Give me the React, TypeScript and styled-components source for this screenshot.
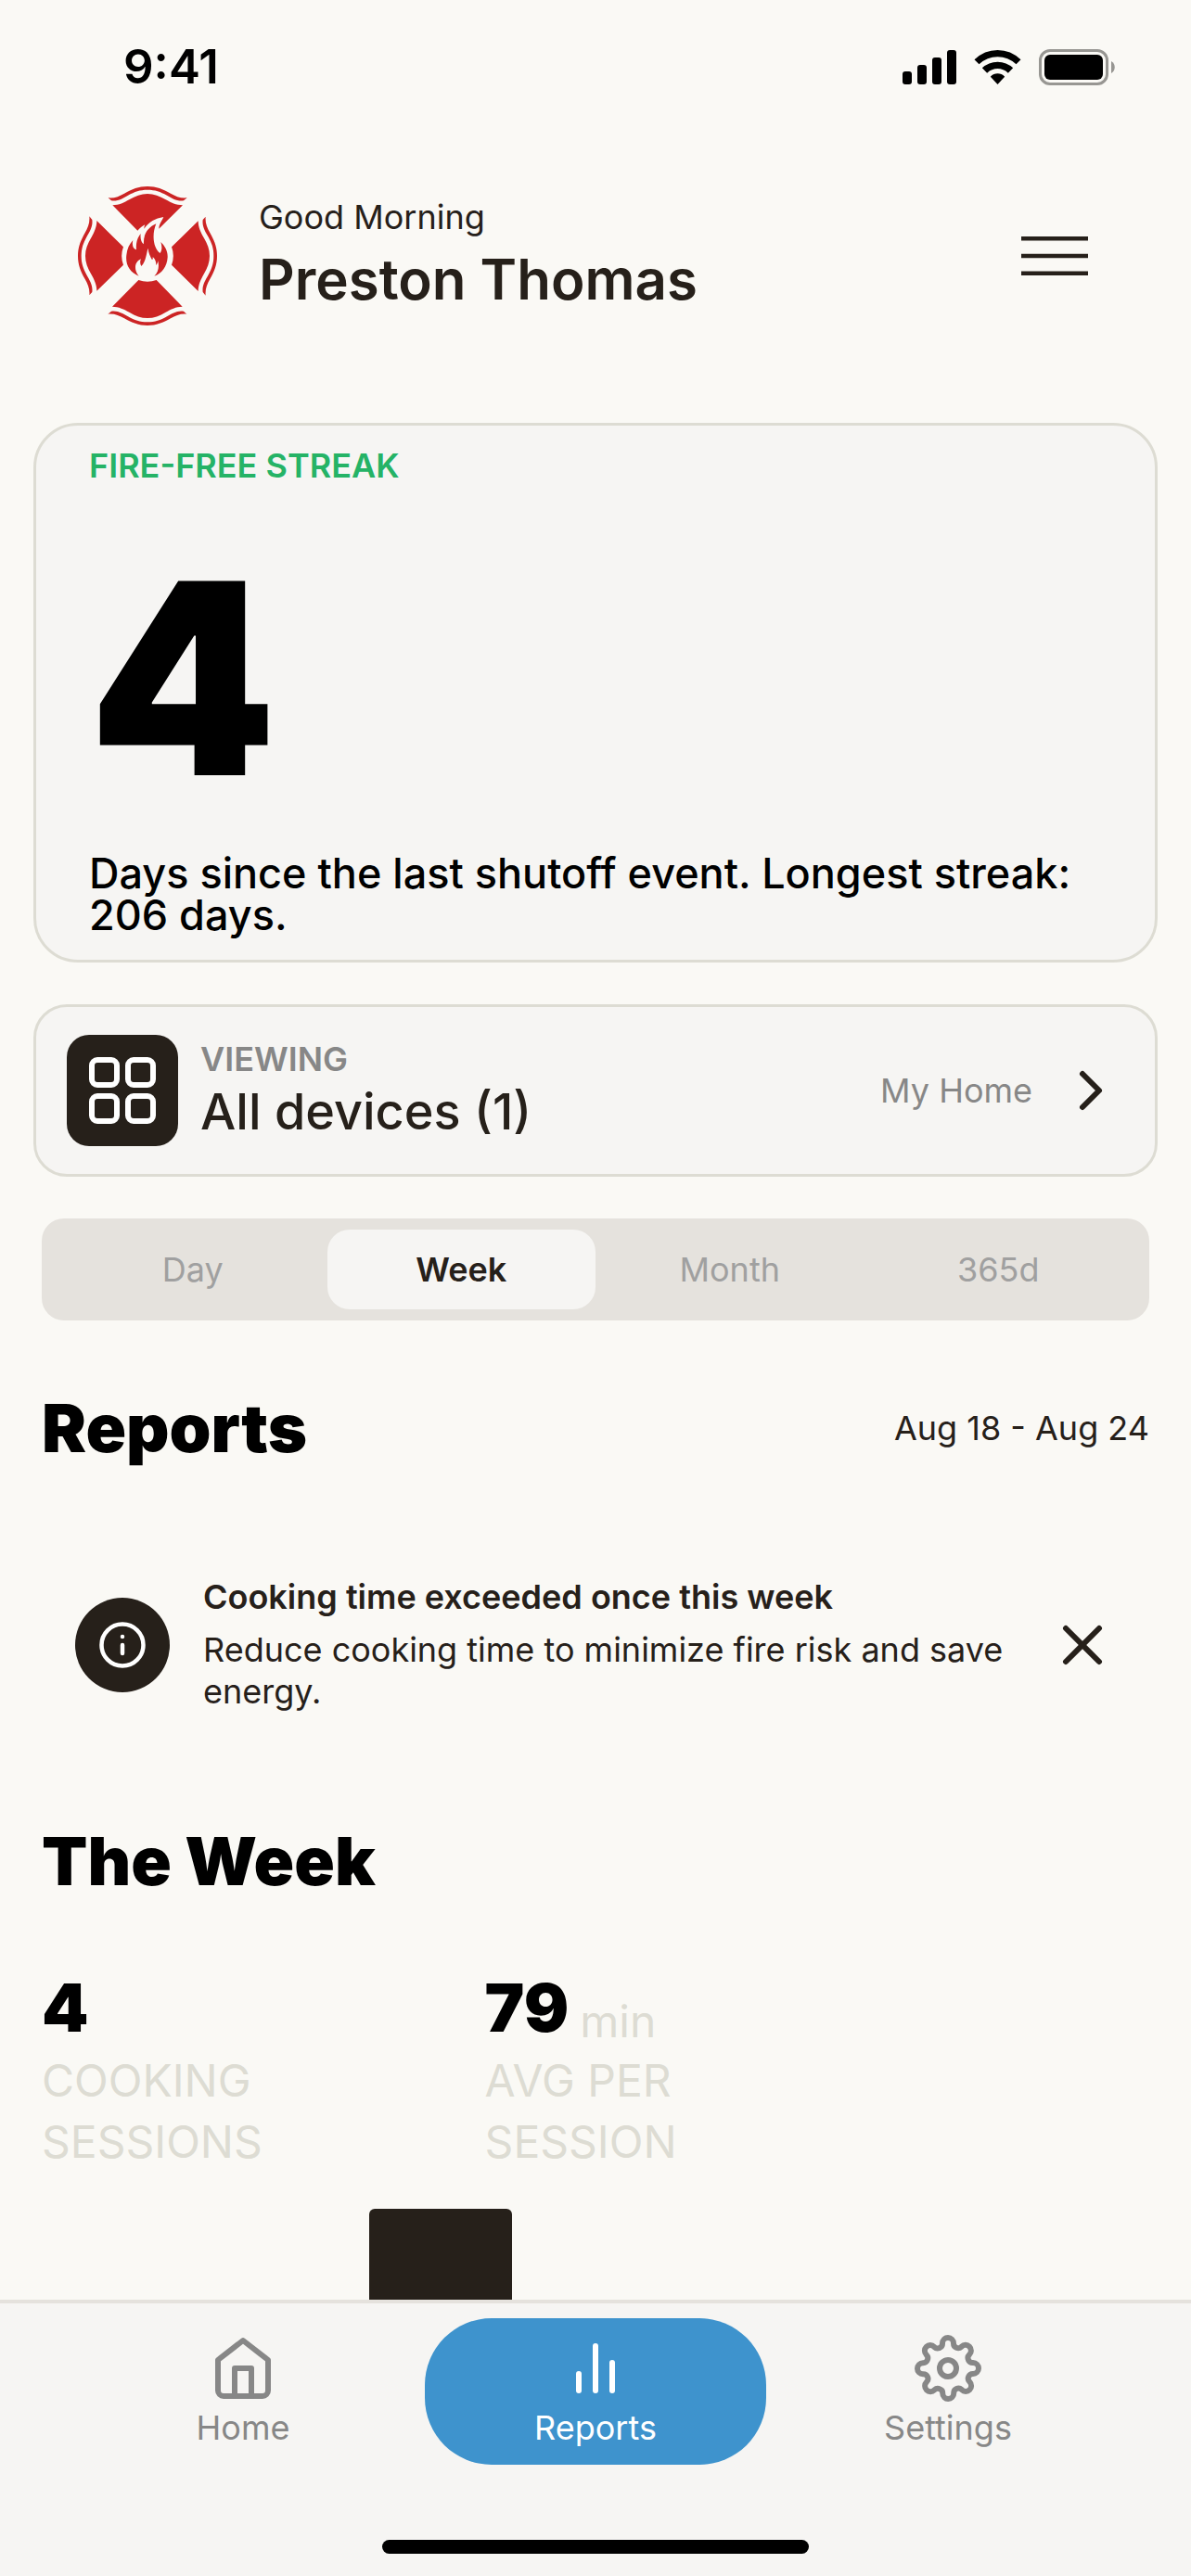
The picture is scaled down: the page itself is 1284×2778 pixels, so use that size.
import { useState } from "react";
import styled, { createGlobalStyle } from "styled-components";
import {
  FiBarChart2,
  FiChevronRight,
  FiHome,
  FiInfo,
  FiSettings,
  FiX,
} from "react-icons/fi";

const colors = {
  background: "#faf9f5",
  surface: "#f6f5f3",
  track: "#e5e2dd",
  border: "#dddcd3",
  ink: "#26201a",
  black: "#000000",
  gray: "#878787",
  grayLight: "#a0a0a0",
  green: "#25b366",
  blue: "#3e93cd",
  red: "#cc2424",
  white: "#ffffff",
};

const periods = ["Day", "Week", "Month", "365d"];

const sessions = [
  { day: "Mon", share: 0 },
  { day: "Tue", share: 0 },
  { day: "Wed", share: 100 },
  { day: "Thu", share: 0 },
  { day: "Fri", share: 0 },
  { day: "Sat", share: 0 },
  { day: "Sun", share: 0 },
];

const navItems = [
  { label: "Home", icon: FiHome },
  { label: "Reports", icon: FiBarChart2 },
  { label: "Settings", icon: FiSettings },
];

const petal =
  "M184 124C205 124 222 115 238 106C258 94 276 87 297 87C318 87 336 94 356 106C372 115 390 124 411 124L326 210A82 82 0 0 0 268 210Z";
const band =
  "M170 100C190 102 206 95 222 86C247 72 268 63 297 63C326 63 347 72 372 86C388 95 404 102 425 100L414 109C392 112 376 101 360 92C338 80 322 74 297 74C272 74 256 80 234 92C218 101 202 112 180 109Z";

const Logo = () => (
  <svg width="150" height="150" viewBox="72 63 450 450" fill={colors.red} aria-hidden="true">
    {[0, 90, 180, 270].map((angle) => (
      <path key={angle} d={band} transform={`rotate(${angle} 297 288)`} />
    ))}
    {[90, 180, 270].map((angle) => (
      <path key={angle} d={petal} transform={`rotate(${angle} 297 288)`} />
    ))}
    <path d="M184 124C205 124 222 115 238 106C258 94 276 87 297 87C318 87 336 94 356 106C372 115 390 124 411 124L334 200C334 186 343 176 349 162C322 166 302 178 286 200C286 195 287 191 289 187C280 191 272 198 265 206Z" />
    <path d="M250 237C246 255 251 266 261 268C259 248 263 231 275 216C273 233 277 244 285 250C283 217 298 196 325 184C310 220 316 264 338 279C345 268 344 256 340 243C355 258 363 273 362 293C360 322 344 344 319 353C333 341 335 322 331 304C330 311 328 315 325 318C325 308 323 299 314 291C315 296 314 299 312 301C305 288 300 278 299 263C293 278 293 305 277 321C273 314 272 306 276 298C256 306 251 332 269 353C239 341 225 315 229 285C231 265 238 250 250 237Z" />
  </svg>
);

const SignalIcon = () => (
  <svg width="58" height="37" viewBox="0 0 58 37" aria-hidden="true">
    <rect x="0" y="23" width="10" height="14" rx="3" />
    <rect x="16" y="16" width="10" height="21" rx="3" />
    <rect x="32" y="8" width="10" height="29" rx="3" />
    <rect x="48" y="0" width="10" height="37" rx="3" />
  </svg>
);

const WifiIcon = () => (
  <svg width="51" height="37" viewBox="331 72 152 111" aria-hidden="true">
    <path d="M332 103Q364 72 407 72Q450 72 482 103L467 118Q441 94 407 94Q373 94 347 118Z" />
    <path d="M357 130Q378 110 407 110Q436 110 457 130L441 146Q426 132 407 132Q388 132 373 146Z" />
    <path d="M384 158Q394 148 407 148Q420 148 430 158L407 183Z" />
  </svg>
);

const BatteryIcon = () => (
  <svg width="82" height="39" viewBox="0 0 82 39" aria-hidden="true">
    <rect x="1.5" y="1.5" width="72" height="36" rx="10.5" fill="none" stroke="#979692" strokeWidth="3" />
    <rect x="6" y="6" width="63" height="27" rx="6" />
    <path d="M78 13C83 15.500 83 23.500 78 26Z" fill="#979692" />
  </svg>
);

const MenuIcon = () => (
  <svg width="72" height="42" viewBox="0 0 72 42" stroke="currentColor" strokeWidth="4.500" aria-hidden="true">
    <path d="M0 2.250H72M0 21H72M0 39.750H72" />
  </svg>
);

const GridIcon = () => (
  <svg
    width="72"
    height="72"
    viewBox="0 0 24 24"
    fill="none"
    stroke={colors.white}
    strokeWidth="2"
    aria-hidden="true"
  >
    <rect x="1" y="1" width="9" height="9" rx="2" />
    <rect x="14" y="1" width="9" height="9" rx="2" />
    <rect x="1" y="14" width="9" height="9" rx="2" />
    <rect x="14" y="14" width="9" height="9" rx="2" />
  </svg>
);

const App = () => {
  const [period, setPeriod] = useState("Week");
  const [tab, setTab] = useState("Reports");
  const [alertOpen, setAlertOpen] = useState(true);

  return (
    <>
      <GlobalStyle />
      <Screen>
        <StatusBar>
          <span>9:41</span>
          <StatusIcons>
            <SignalIcon />
            <WifiIcon />
            <BatteryIcon />
          </StatusIcons>
        </StatusBar>

        <Content>
          <Header>
            <Logo />
            <Greeting>
              <Hello>Good Morning</Hello>
              <UserName>Preston Thomas</UserName>
            </Greeting>
            <IconButton aria-label="Menu">
              <MenuIcon />
            </IconButton>
          </Header>

          <Cards>
            <StreakCard>
              <StreakLabel>FIRE-FREE STREAK</StreakLabel>
              <StreakValue>4</StreakValue>
              <StreakText>
                Days since the last shutoff event. Longest streak: 206 days.
              </StreakText>
            </StreakCard>

            <DeviceCard>
              <DeviceTile>
                <GridIcon />
              </DeviceTile>
              <DeviceInfo>
                <DeviceLabel>VIEWING</DeviceLabel>
                <DeviceName>All devices (1)</DeviceName>
              </DeviceInfo>
              <DevicePlace>My Home</DevicePlace>
              <FiChevronRight size={72} />
            </DeviceCard>
          </Cards>

          <Body>
            <Segments>
              {periods.map((item) => (
                <Segment
                  key={item}
                  $active={item === period}
                  aria-pressed={item === period}
                  onClick={() => setPeriod(item)}
                >
                  {item}
                </Segment>
              ))}
            </Segments>

            <SectionHead>
              <SectionTitle>Reports</SectionTitle>
              <DateRange>Aug 18 - Aug 24</DateRange>
            </SectionHead>

            {alertOpen && (
              <Alert>
                <AlertBadge>
                  <FiInfo size={54} />
                </AlertBadge>
                <AlertContent>
                  <AlertTitle>Cooking time exceeded once this week</AlertTitle>
                  <AlertText>
                    Reduce cooking time to minimize fire risk and save energy.
                  </AlertText>
                </AlertContent>
                <IconButton aria-label="Close" onClick={() => setAlertOpen(false)}>
                  <FiX size={72} />
                </IconButton>
              </Alert>
            )}

            <SectionTitle>The Week</SectionTitle>

            <Stats>
              <div>
                <StatValue>4</StatValue>
                <StatLabel>COOKING SESSIONS</StatLabel>
              </div>
              <div>
                <StatValue>
                  79 <StatUnit>min</StatUnit>
                </StatValue>
                <StatLabel>AVG PER SESSION</StatLabel>
              </div>
            </Stats>
          </Body>

          <Chart>
            {sessions.map(({ day, share }) => (
              <Bar key={day} style={{ height: `${share}%` }} />
            ))}
          </Chart>
        </Content>

        <BottomBar>
          <Nav>
            {navItems.map(({ label, icon: Icon }) => (
              <NavItem
                key={label}
                href={`#${label.toLowerCase()}`}
                $active={label === tab}
                onClick={() => setTab(label)}
              >
                <Icon size={72} />
                {label}
              </NavItem>
            ))}
          </Nav>
          <HomeIndicator />
        </BottomBar>
      </Screen>
    </>
  );
};

const GlobalStyle = createGlobalStyle`
  * {
    box-sizing: border-box;
  }

  body {
    margin: 0;
    background: ${colors.background};
    color: ${colors.ink};
    font-family: Inter, "Liberation Sans", sans-serif;
    font-size: 36px;
    line-height: 44px;
  }

  h1, h2, p {
    margin: 0;
  }

  button {
    padding: 0;
    border: none;
    background: none;
    color: inherit;
    font: inherit;
    cursor: pointer;
  }

  svg {
    display: block;
    flex-shrink: 0;
  }
`;

const Screen = styled.div`
  display: flex;
  flex-direction: column;
  height: 100vh;
`;

const StatusBar = styled.div`
  display: flex;
  align-items: center;
  justify-content: space-between;
  height: 144px;
  padding: 0 82px 0 133px;
  flex-shrink: 0;
  color: ${colors.black};
  font-size: 51px;
  font-weight: 600;
`;

const StatusIcons = styled.div`
  display: flex;
  align-items: center;
  gap: 19px;
`;

const Content = styled.main`
  display: flex;
  flex-direction: column;
  flex: 1;
  min-height: 0;
  overflow-y: auto;
  scrollbar-width: none;
`;

const Header = styled.header`
  display: flex;
  align-items: center;
  gap: 45px;
  padding: 57px 111px 105px 84px;
`;

const Greeting = styled.div`
  display: flex;
  flex-direction: column;
  flex: 1;
  gap: 9px;
  padding-bottom: 3px;
`;

const Hello = styled.p``;

const UserName = styled.h1`
  font-size: 60px;
  font-weight: 600;
  line-height: 72px;
`;

const IconButton = styled.button`
  flex-shrink: 0;
`;

const Cards = styled.div`
  display: flex;
  flex-direction: column;
  gap: 45px;
  padding: 0 36px;
`;

const StreakCard = styled.section`
  padding: 21px 57px 26px;
  border: 3px solid ${colors.border};
  border-radius: 48px;
  background: ${colors.surface};
  color: ${colors.black};
`;

const StreakLabel = styled.h2`
  color: ${colors.green};
  font-size: 36px;
  font-weight: 600;
`;

const StreakValue = styled.p`
  margin: 57px 0 38px;
  font-size: 288px;
  font-weight: 900;
  line-height: 300px;
`;

const StreakText = styled.p`
  font-size: 45px;
  font-weight: 500;
  line-height: 45px;
`;

const DeviceCard = styled.button`
  display: flex;
  align-items: center;
  gap: 24px;
  && {
    padding: 30px 33px;
    border: 3px solid ${colors.border};
    background: ${colors.surface};
  }
  border-radius: 36px;
  text-align: left;
`;

const DeviceTile = styled.span`
  padding: 24px;
  border-radius: 24px;
  background: ${colors.ink};
`;

const DeviceInfo = styled.span`
  display: flex;
  flex-direction: column;
  flex: 1;
  gap: 2px;
`;

const DeviceLabel = styled.span`
  color: ${colors.gray};
  font-weight: 600;
`;

const DeviceName = styled.span`
  font-size: 54px;
  font-weight: 500;
  line-height: 66px;
`;

const DevicePlace = styled.span`
  padding-right: 3px;
  color: ${colors.gray};
`;

const Body = styled.div`
  padding: 45px 45px 0;
`;

const Segments = styled.div`
  display: flex;
  padding: 12px 18px;
  border-radius: 24px;
  background: ${colors.track};
`;

const Segment = styled.button<{ $active: boolean }>`
  && {
    flex: 1;
    padding: 21px 0;
    border-radius: 24px;
    background: ${({ $active }) => ($active ? colors.surface : "transparent")};
    color: ${({ $active }) => ($active ? colors.ink : colors.grayLight)};
    font-weight: ${({ $active }) => ($active ? 600 : 400)};
  }
`;

const SectionHead = styled.div`
  display: flex;
  align-items: center;
  justify-content: space-between;
  margin-top: 72px;
`;

const SectionTitle = styled.h2`
  color: ${colors.black};
  font-size: 72px;
  font-weight: 900;
  line-height: 88px;
`;

const DateRange = styled.p``;

const Alert = styled.section`
  display: flex;
  align-items: center;
  gap: 36px;
  margin: 80px 0;
  padding: 36px;
`;

const AlertBadge = styled.div`
  padding: 24px;
  border-radius: 50%;
  background: ${colors.ink};
  color: ${colors.white};
`;

const AlertContent = styled.div`
  display: flex;
  flex-direction: column;
  flex: 1;
  gap: 12px;
  line-height: 45px;
`;

const AlertTitle = styled.p`
  font-weight: 600;
`;

const AlertText = styled.p``;

const Stats = styled.div`
  display: grid;
  grid-template-columns: 2fr 3fr;
  margin-top: 70px;
`;

const StatValue = styled.p`
  display: flex;
  align-items: flex-end;
  gap: 12px;
  color: ${colors.black};
  font-size: 72px;
  font-weight: 900;
  line-height: 88px;
`;

const StatUnit = styled.span`
  color: ${colors.border};
  font-size: 48px;
  font-weight: 400;
  line-height: 58px;
`;

const StatLabel = styled.p`
  max-width: 300px;
  margin-top: 2px;
  color: ${colors.border};
  font-size: 48px;
  line-height: 66px;
`;

const Chart = styled.div`
  display: grid;
  grid-template-columns: repeat(7, 1fr);
  align-items: end;
  gap: 18px;
  flex: 1;
  margin-top: 39px;
  padding: 0 44px 0 54px;
`;

const Bar = styled.div`
  border-radius: 6px 6px 0 0;
  background: ${colors.ink};
`;

const BottomBar = styled.footer`
  flex-shrink: 0;
  padding: 16px 78px 24px;
  border-top: 4px solid ${colors.track};
  background: ${colors.surface};
`;

const Nav = styled.nav`
  display: grid;
  grid-template-columns: repeat(3, 1fr);
  gap: 12px;
`;

const NavItem = styled.a<{ $active: boolean }>`
  display: flex;
  flex-direction: column;
  align-items: center;
  gap: 6px;
  padding: 18px 0;
  border-radius: 72px;
  background: ${({ $active }) => ($active ? colors.blue : "transparent")};
  color: ${({ $active }) => ($active ? colors.white : colors.gray)};
  text-decoration: none;
`;

const HomeIndicator = styled.div`
  width: 460px;
  height: 15px;
  margin: 81px auto 0;
  border-radius: 8px;
  background: ${colors.black};
`;

export default App;
